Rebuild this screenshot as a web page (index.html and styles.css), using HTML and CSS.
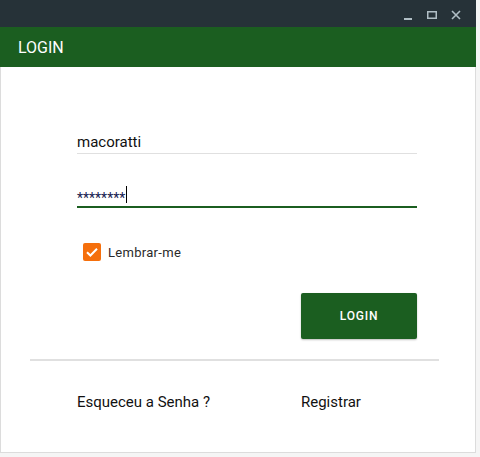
FILE: index.html
```html
<!DOCTYPE html>
<html>
<head>
<meta charset="utf-8">
<link rel="stylesheet" href="styles.css">
</head>
<body>
<div class="window">
  <div class="titlebar">
    <svg class="ctl" width="12" height="12" viewBox="0 0 12 12"><rect x="2" y="9" width="8" height="2" fill="#b0bec5"/></svg>
    <svg class="ctl" width="12" height="12" viewBox="0 0 12 12"><rect x="1.75" y="2.75" width="8.5" height="6.5" fill="none" stroke="#b0bec5" stroke-width="1.5"/></svg>
    <svg class="ctl" width="12" height="12" viewBox="0 0 12 12"><path d="M2 2 L10 10 M10 2 L2 10" stroke="#b0bec5" stroke-width="1.6"/></svg>
  </div>
  <div class="header">LOGIN</div>
  <div class="content">
    <div class="form">
      <div class="field">
        <div class="value">macoratti</div>
      </div>
      <div class="field focused">
        <div class="value pw"><span>********</span><span class="caret"></span></div>
      </div>
      <label class="check">
        <span class="box"><svg width="18" height="18" viewBox="0 0 18 18"><path d="M4 9.2 L7.4 12.5 L14 5.8" fill="none" stroke="#fff" stroke-width="2"/></svg></span>
        <span class="label">Lembrar-me</span>
      </label>
      <div class="actions">
        <button class="btn">LOGIN</button>
      </div>
    </div>
    <div class="divider"></div>
    <div class="links">
      <span class="link">Esqueceu a Senha ?</span>
      <span class="link">Registrar</span>
    </div>
  </div>
</div>
</body>
</html>
```
FILE: styles.css
```css
html, body {
  margin: 0;
  padding: 0;
  background: #f5f5f5;
  font-family: Roboto, "Liberation Sans", sans-serif;
}
.window {
  width: 476px;
  height: 453px;
  display: flex;
  flex-direction: column;
}
.titlebar {
  height: 27px;
  background: #263238;
  display: flex;
  justify-content: flex-end;
  align-items: center;
  gap: 12px;
  padding-right: 14px;
  box-sizing: border-box;
}
.ctl { display: block; margin-top: 2px; }
.header {
  height: 40px;
  background: #1b5e20;
  color: #fff;
  font-size: 16px;
  display: flex;
  align-items: center;
  padding-left: 18px;
}
.content {
  flex: 1;
  background: #fff;
  border: 1px solid #dcdcdc;
  border-top: none;
  display: flex;
  flex-direction: column;
}
.form {
  margin-left: 76px;
  width: 340px;
  padding-top: 65px;
}
.field {
  display: flex;
  align-items: flex-start;
  border-bottom: 1px solid #e0e0e0;
  height: 21px;
  margin-bottom: 32px;
}
.field.focused {
  border-bottom: 2px solid #1b5e20;
  height: 20px;
  margin-bottom: 0;
}
.value {
  font-size: 15px;
  line-height: 20px;
  color: #111;
}
.pw {
  color: #14204f;
  font-size: 14px;
  display: flex;
  align-items: flex-start;
  margin-top: 2px;
}
.caret {
  display: block;
  width: 1px;
  height: 17px;
  background: #000;
  margin-left: 1px;
  margin-top: -2px;
}
.check {
  display: flex;
  align-items: center;
  margin-top: 35px;
  margin-left: 6px;
  gap: 7px;
}
.box {
  width: 18px;
  height: 18px;
  background: #f56f0c;
  border-radius: 2px;
  display: block;
}
.box svg { display: block; }
.label {
  font-size: 13px;
  color: #2a2a2a;
  letter-spacing: 0.3px;
}
.actions {
  display: flex;
  justify-content: flex-end;
  margin-top: 32px;
}
.btn {
  width: 116px;
  height: 46px;
  background: #1b5e20;
  color: #fff;
  border: none;
  border-radius: 2px;
  font-family: Roboto, "Liberation Sans", sans-serif;
  font-size: 12px;
  font-weight: 500;
  letter-spacing: 0.8px;
  box-shadow: 0 1px 2px rgba(0,0,0,0.25);
}
.divider {
  margin: 20px 36px 0 29px;
  height: 2px;
  background: #e0e0e0;
}
.links {
  display: flex;
  padding-left: 76px;
  margin-top: 32px;
  font-size: 15px;
  color: #111;
}
.link:first-child { width: 224px; }
```
